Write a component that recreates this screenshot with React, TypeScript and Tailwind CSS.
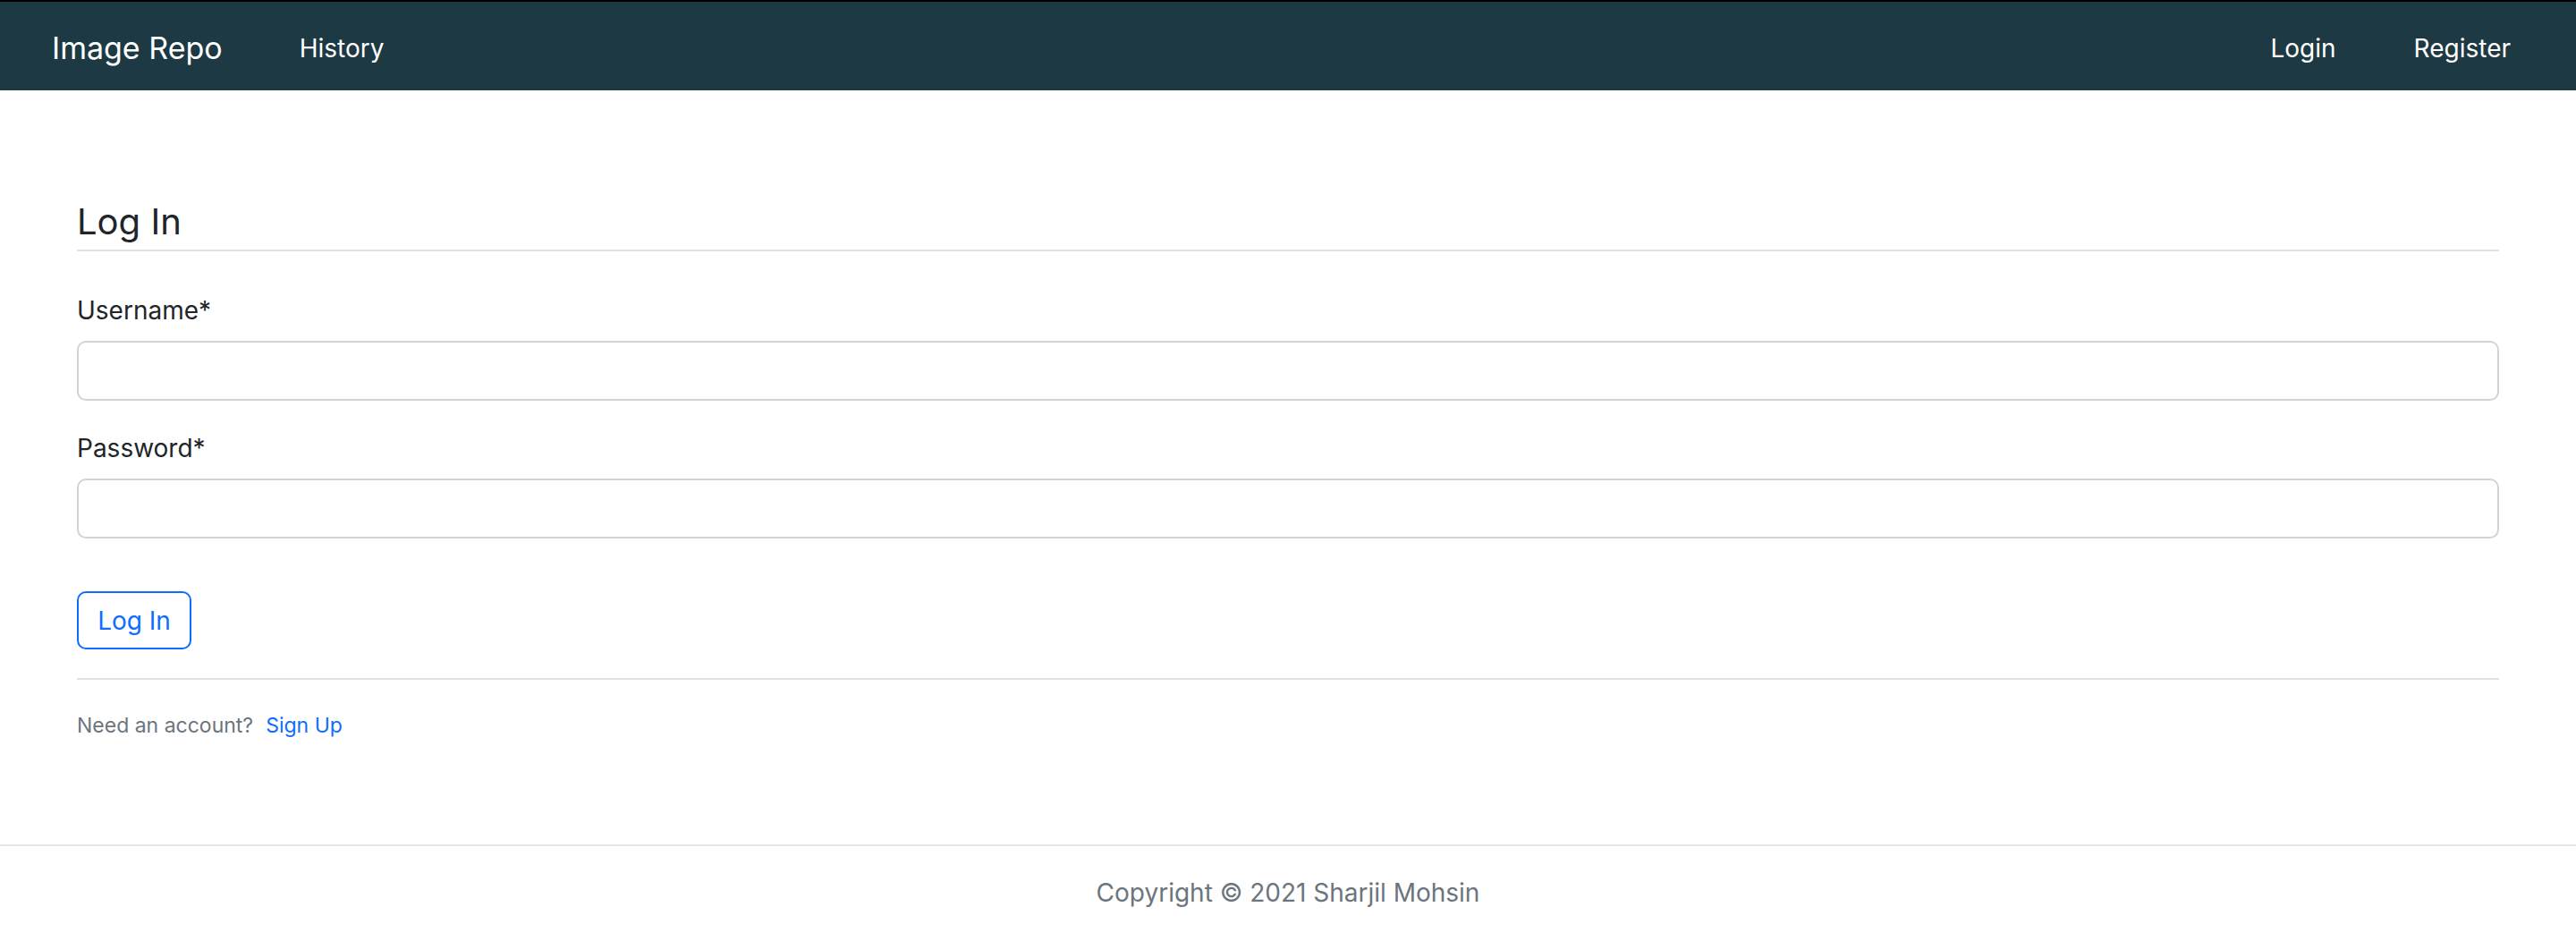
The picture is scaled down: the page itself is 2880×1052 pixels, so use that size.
export default function App() {
  return (
    <div
      className="flex min-h-[1052px] flex-col bg-white text-[#212529]"
      style={{ fontFamily: "Inter, 'Liberation Sans', sans-serif" }}
    >
      <nav className="flex h-[101px] items-center border-t-2 border-black bg-[#1d3943] pl-[58px] pr-[73px] pt-[5px] text-white">
        <span className="text-[34px] leading-none">Image Repo</span>
        <a className="ml-[86px] text-[28px] leading-none">History</a>
        <div className="ml-auto flex items-center gap-[87px] text-[28px] leading-none">
          <a>Login</a>
          <a>Register</a>
        </div>
      </nav>

      <main className="flex-1 pl-[86px] pr-[86px] pt-[120px]">
        <h3 className="border-b-2 border-[#dee2e6] pb-[5px] text-[40px] font-normal leading-[53px]">
          Log In
        </h3>

        <form className="pt-[44px]">
          <label className="mb-[12px] block text-[28px] leading-[44px]">Username*</label>
          <input
            type="text"
            className="block h-[67px] w-full rounded-[10px] border-2 border-[#ced4da] bg-white px-4 text-[28px] outline-none"
          />
          <label className="mb-[12px] mt-[31px] block text-[28px] leading-[44px]">Password*</label>
          <input
            type="password"
            className="block h-[67px] w-full rounded-[10px] border-2 border-[#ced4da] bg-white px-4 text-[28px] outline-none"
          />
          <button
            type="button"
            className="mt-[59px] h-[65px] w-[128px] rounded-[10px] border-2 border-[#0d6efd] text-[28px] text-[#0d6efd]"
          >
            Log In
          </button>
        </form>

        <div className="mt-[32px] border-t-2 border-[#dee2e6] pt-[33px]">
          <p className="text-[23px] leading-[37px] text-[#6c757d]">
            Need an account?
            <a className="ml-[14px] text-[#0d6efd]">Sign Up</a>
          </p>
        </div>
      </main>

      <footer className="mt-auto h-[108px] border-t-2 border-[#e5e5e5] pt-[30px] text-center text-[28px] leading-[44px] text-[#6c757d]">
        Copyright © 2021 Sharjil Mohsin
      </footer>
    </div>
  );
}
